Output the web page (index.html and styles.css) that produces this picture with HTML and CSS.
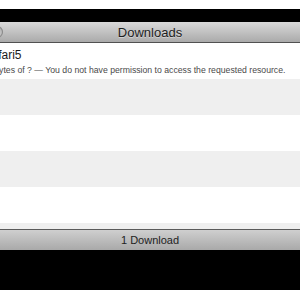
FILE: index.html
```html
<!DOCTYPE html>
<html>
<head>
<meta charset="utf-8">
<link rel="stylesheet" href="styles.css">
</head>
<body>
<div class="top-gap"></div>
<div class="band band-top"></div>
<div class="window">
  <div class="titlebar">
    <span class="light"></span>
    <span class="title">Downloads</span>
  </div>
  <div class="list">
    <div class="row">
      <div class="item">
        <div class="name">Safari5</div>
        <div class="status">0 bytes of ? — You do not have permission to access the requested resource.</div>
      </div>
    </div>
    <div class="row alt"></div>
    <div class="row"></div>
    <div class="row alt"></div>
    <div class="row"></div>
    <div class="row alt short"></div>
  </div>
  <div class="footer">1 Download</div>
</div>
<div class="band band-bottom"></div>
</body>
</html>
```

FILE: styles.css
```css
html, body {
  margin: 0;
  padding: 0;
  background: #ffffff;
  width: 300px;
  height: 300px;
  overflow: hidden;
  font-family: "Liberation Sans", sans-serif;
}
.top-gap { height: 9px; }
.band { background: #000000; }
.band-top { height: 13px; }
.band-bottom { height: 40px; }
.window { display: flex; flex-direction: column; }
.titlebar {
  position: relative;
  height: 20px;
  border-bottom: 1px solid #515151;
  background: linear-gradient(#d9d9d9, #aaaaaa);
  display: flex;
  align-items: center;
  justify-content: center;
}
.light {
  position: absolute;
  left: -9px;
  top: 4px;
  width: 12px;
  height: 12px;
  border-radius: 50%;
  background: radial-gradient(circle at 50% 60%, #d8d8d8, #9a9a9a);
  box-shadow: inset 0 0 0 1px #8a8a8a;
}
.title {
  font-size: 13px;
  color: #1e1e1e;
  text-shadow: 0 1px 0 rgba(255,255,255,0.4);
  padding-top: 1px;
}
.list { display: flex; flex-direction: column; }
.row { height: 36px; background: #ffffff; overflow: hidden; }
.row.alt { background: #efefef; }
.row.short { height: 6px; }
.item { padding-top: 5px; }
.name {
  margin-left: -16.5px;
  font-size: 12px;
  line-height: 14px;
  color: #1a1a1a;
}
.status {
  margin-left: -13px;
  font-size: 8.7px;
  line-height: 12px;
  margin-top: 2px;
  color: #4a4a4a;
  white-space: nowrap;
}
.footer {
  height: 20px;
  border-top: 1px solid #5a5a5a;
  background: linear-gradient(#cfcfcf, #a9a9a9);
  display: flex;
  align-items: center;
  justify-content: center;
  font-size: 11px;
  color: #222222;
}
```
